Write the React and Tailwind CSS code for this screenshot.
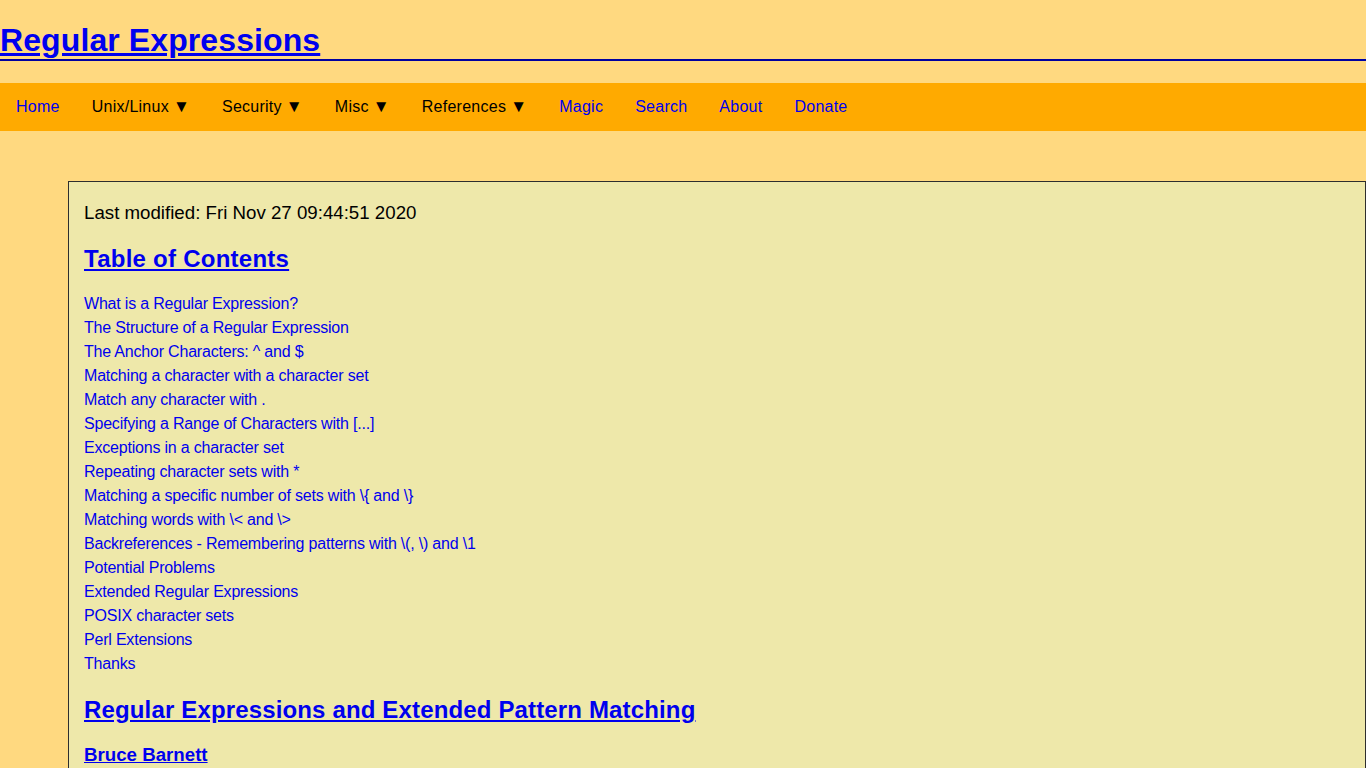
const navItems = [
  { label: "Home", link: true },
  { label: "Unix/Linux", menu: true },
  { label: "Security", menu: true },
  { label: "Misc", menu: true },
  { label: "References", menu: true },
  { label: "Magic", link: true },
  { label: "Search", link: true },
  { label: "About", link: true },
  { label: "Donate", link: true },
];

const toc = [
  "What is a Regular Expression?",
  "The Structure of a Regular Expression",
  "The Anchor Characters: ^ and $",
  "Matching a character with a character set",
  "Match any character with .",
  "Specifying a Range of Characters with [...]",
  "Exceptions in a character set",
  "Repeating character sets with *",
  "Matching a specific number of sets with \\{ and \\}",
  "Matching words with \\< and \\>",
  "Backreferences - Remembering patterns with \\(, \\) and \\1",
  "Potential Problems",
  "Extended Regular Expressions",
  "POSIX character sets",
  "Perl Extensions",
  "Thanks",
];

const App = () => {
  return (
    <div className="min-h-screen bg-[#ffd980] font-['Liberation_Sans',Arial,sans-serif] text-black overflow-hidden">
      <h1 className="pt-[22px] text-[32px] leading-[37px] font-bold border-b-2 border-[#0000a0] tracking-[0.1px]">
        <a href="#" className="text-[#0000ee] underline">Regular Expressions</a>
      </h1>

      <nav className="mt-[22px] h-[48px] bg-[#ffaa00] flex items-center text-[16px] tracking-[0.25px]">
        {navItems.map((item) => (
          <a
            key={item.label}
            href="#"
            className={`px-4 leading-[48px] ${item.link ? "text-[#0000ee]" : "text-black"}`}
          >
            {item.label}
            {item.menu && <span className="ml-[4px] text-[17px]">▼</span>}
          </a>
        ))}
      </nav>

      <div className="mt-[50px] ml-[68px] bg-[#eee8aa] border border-[#2e2e2e] border-b-0 pl-[15px] pr-4 pt-[20px] pb-8">
        <p className="text-[18.7px] leading-[21.5px]">Last modified: Fri Nov 27 09:44:51 2020</p>

        <h2 className="mt-[21px] text-[24px] leading-[27.5px] font-bold tracking-[0.25px]">
          <a href="#" className="text-[#0000ee] underline">Table of Contents</a>
        </h2>

        <ul className="mt-[20px] text-[16px] leading-[24px] tracking-[-0.2px]">
          {toc.map((t) => (
            <li key={t}>
              <a href="#" className="text-[#0000ee]">{t}</a>
            </li>
          ))}
        </ul>

        <h2 className="mt-[20px] text-[24px] leading-[27.5px] font-bold tracking-[0.15px]">
          <a href="#" className="text-[#0000ee] underline">Regular Expressions and Extended Pattern Matching</a>
        </h2>

        <h3 className="mt-[20px] text-[18.7px] leading-[21.5px] font-bold">
          <a href="#" className="text-[#0000ee] underline">Bruce Barnett</a>
        </h3>
      </div>
    </div>
  );
};

export default App;
